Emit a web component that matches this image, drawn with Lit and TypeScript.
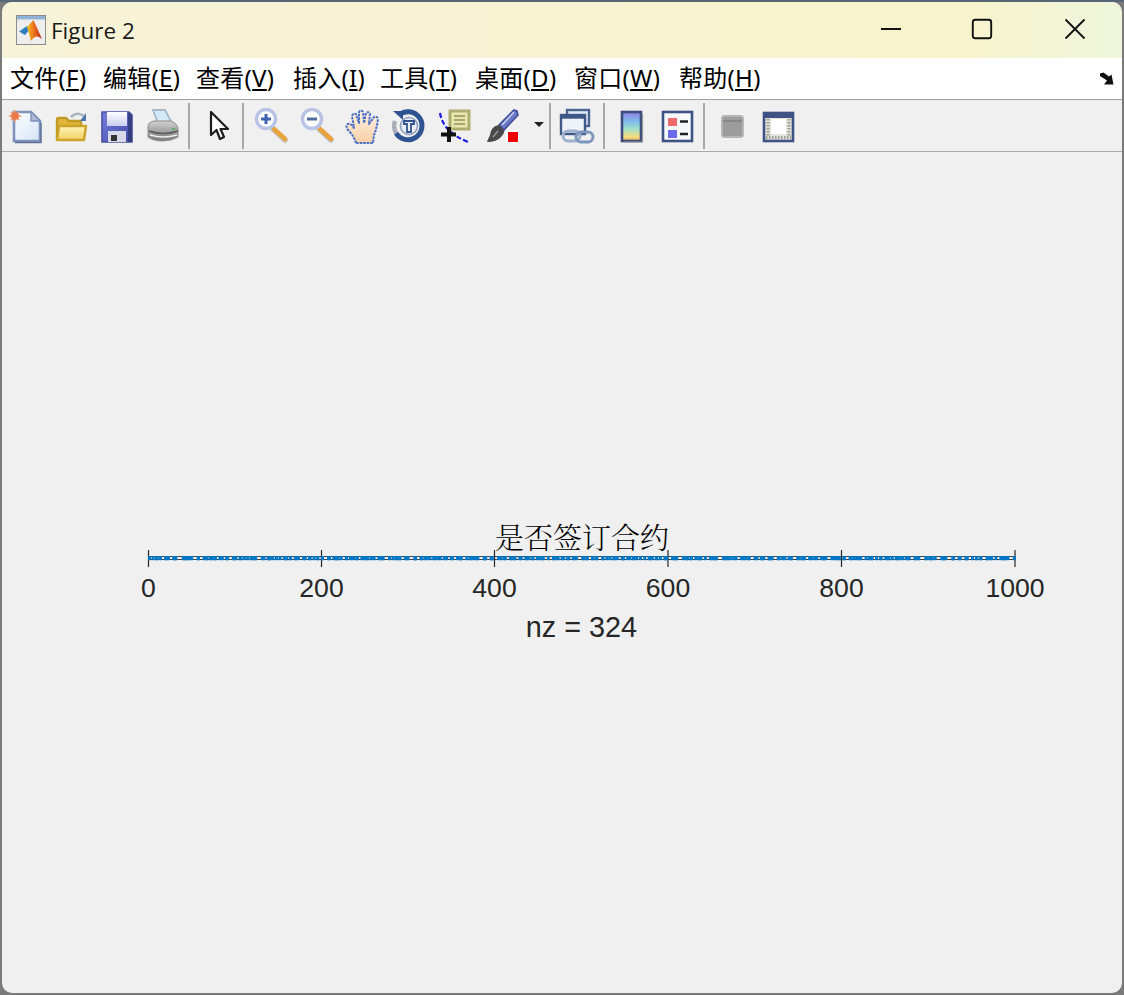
import { LitElement, css, html, svg } from 'lit';
import { customElement } from 'lit/decorators.js';

// label, access key, slot width in the menu bar
const MENUS: [string, string, number][] = [
  ['文件', 'F', 93], ['编辑', 'E', 93], ['查看', 'V', 97], ['插入', 'I', 87],
  ['工具', 'T', 95], ['桌面', 'D', 99], ['窗口', 'W', 105], ['帮助', 'H', 90],
];

const TICKS = [
  { x: 148.5, label: '0' },
  { x: 321.5, label: '200' },
  { x: 494.5, label: '400' },
  { x: 668, label: '600' },
  { x: 841.5, label: '800' },
  { x: 1015, label: '1000' },
];

// spy() marks: fixed seed so the picture never changes between runs
function spyDots() {
  let seed = 20240;
  const out: number[] = [];
  const step = 863 / 324;
  for (let i = 0; i < 324; i++) {
    seed = (seed * 16807) % 2147483647;
    out.push(148.5 + (i + (seed / 2147483647) * 2 - 0.5) * step);
  }
  return out;
}

const icon = (body: unknown) => html`<svg class="ico" viewBox="0 0 36 36" width="36" height="36">${body}</svg>`;

const DEFS = svg`
  <defs>
    <linearGradient id="paper" x1="0" y1="0" x2="1" y2="1"><stop offset="0" stop-color="#ffffff"/><stop offset="1" stop-color="#d3e4f8"/></linearGradient>
    <linearGradient id="fold" x1="0" y1="0" x2="0" y2="1"><stop offset="0" stop-color="#fff6b8"/><stop offset="1" stop-color="#f2cf63"/></linearGradient>
    <linearGradient id="disk" x1="0" y1="0" x2="1" y2="1"><stop offset="0" stop-color="#7a7fe0"/><stop offset="1" stop-color="#3d4aa0"/></linearGradient>
    <linearGradient id="label" x1="0" y1="0" x2="0" y2="1"><stop offset="0" stop-color="#ffffff"/><stop offset="1" stop-color="#c9cdf0"/></linearGradient>
    <linearGradient id="printer" x1="0" y1="0" x2="0" y2="1"><stop offset="0" stop-color="#d0d0d0"/><stop offset="1" stop-color="#787878"/></linearGradient>
    <linearGradient id="skin" x1="0" y1="0" x2="0" y2="1"><stop offset="0" stop-color="#fff2e2"/><stop offset="1" stop-color="#f7cfa8"/></linearGradient>
    <linearGradient id="cbar" x1="0" y1="0" x2="0" y2="1">
      <stop offset="0" stop-color="#8f80e8"/><stop offset=".35" stop-color="#7fc0e8"/><stop offset=".6" stop-color="#a5e0c4"/><stop offset=".85" stop-color="#f5dc80"/><stop offset="1" stop-color="#f0b060"/>
    </linearGradient>
    <linearGradient id="peak" x1="0" y1="0" x2="1" y2="0"><stop offset="0" stop-color="#f5c21c"/><stop offset=".55" stop-color="#e8641a"/><stop offset="1" stop-color="#b8261a"/></linearGradient>
  </defs>`;

const lens = (mark: unknown) => svg`
  <path d="M20 21 L32 32" stroke="#8a8a8a" stroke-width="5.5" stroke-linecap="round" opacity=".45"/>
  <path d="M21 21 L32 31" stroke="#e8a33c" stroke-width="4.5" stroke-linecap="round"/>
  <circle cx="13" cy="11" r="9.5" fill="#ffffff" stroke="#b9c3e6" stroke-width="3.4"/>
  ${mark}`;

const ICONS = {
  newFile: icon(svg`
    <path d="M7 4 H24 L33 13 V33 H7 Z" fill="url(#paper)" stroke="#7f93bd" stroke-width="2.6"/>
    <path d="M24 4 V13 H33 Z" fill="#aebcd8" stroke="#7f93bd" stroke-width="1.4"/>
    <path d="M34 15 V34.5 H8" fill="none" stroke="#5d6f96" stroke-width="1.4"/>
    <path d="M8 2 V14 M2 8 H14 M4 4 L12 12 M12 4 L4 12" stroke="#f0a080" stroke-width="1.8"/>
    <circle cx="8" cy="8" r="3.8" fill="#ea7a45"/>`),
  open: icon(svg`
    <path d="M4 31 V12 Q4 10 6 10 H13 L16 13 H28 V31 Z" fill="#e0b53a" stroke="#c09a24" stroke-width="2.4"/>
    <path d="M4 32 L6 18 H33 L31 32 Z" fill="url(#fold)" stroke="#cba428" stroke-width="2.4" stroke-linejoin="round"/>
    <path d="M18 9 Q24 3 31 8" fill="none" stroke="#a9b2c0" stroke-width="2.6"/>
    <path d="M33 5 V13 H27 Z" fill="#4f76a8"/>`),
  save: icon(svg`
    <path d="M3 4 H30 L33 7 V34 H3 Z" fill="url(#disk)" stroke="#4a519f" stroke-width="1.6"/>
    <path d="M33 7 V34 H29 V4 Z" fill="#2e3a78" opacity=".8"/>
    <rect x="8" y="4" width="20" height="14" fill="url(#label)"/>
    <rect x="9" y="23" width="18" height="11" fill="#d7d8e8"/>
    <rect x="12" y="27" width="6" height="6" fill="#333"/>`),
  print: icon(svg`
    <path d="M8 2 H20 L27 15 H13 Z" fill="#d5eaf8" stroke="#a7b9c6" stroke-width="1.8"/>
    <path d="M3 19 Q3 14 9 13 H26 Q33 16 33 21 V29 Q26 33 18 33 Q8 33 3 29 Z" fill="url(#printer)" stroke="#8c8c8c"/>
    <path d="M4 23 Q18 28 33 23" fill="none" stroke="#5c5c5c" stroke-width="1.6"/>
    <path d="M5 27 Q18 31 32 27" fill="none" stroke="#eee" stroke-width="1.6"/>
    <rect x="27" y="20" width="3" height="2" fill="#55b060"/>`),
  arrow: icon(svg`
    <path d="M9 4 L9 27 L14.5 22 L18 31 L22 29 L18.5 21 L26 21 Z" fill="#fff" stroke="#1c1c1c" stroke-width="2.2" stroke-linejoin="round"/>`),
  zoomIn: icon(lens(svg`<path d="M13 6 V16 M8 11 H18" stroke="#3f63ae" stroke-width="3"/>`)),
  zoomOut: icon(lens(svg`<path d="M8 11 H18" stroke="#4f6c9c" stroke-width="3"/>`)),
  hand: icon(svg`
    <path d="M11 35 Q9 28 3 22 Q0 18 3 16 Q6 15 9 20 L7 8 Q8 5 11 6 L14 15 L14 4 Q16 1 18 4 L19 15 L21 5 Q24 3 25 6 L24 16 L29 9 Q32 8 33 11 Q32 20 29 27 L28 35 Z"
      fill="url(#skin)" stroke="#4a6fc4" stroke-width="2" stroke-dasharray="2.6 .9" stroke-linejoin="round"/>`),
  rotate: icon(svg`
    <path d="M8 7 A14 14 0 1 1 5 25" fill="none" stroke="#2f5290" stroke-width="5"/>
    <path d="M5 25 A14 14 0 0 1 4 13" fill="none" stroke="#a9adb5" stroke-width="4.4"/>
    <path d="M2 3 H12 V12 Z" fill="#2f5290"/>
    <circle cx="18" cy="18" r="8.5" fill="#e9eef6" stroke="#8fa0c0" stroke-width="1.6"/>
    <path d="M13 13 H23 V16 H20 V24 H16 V16 H13 Z" fill="none" stroke="#2f5290" stroke-width="1.8"/>`),
  cursor: icon(svg`
    <rect x="13" y="3" width="19" height="18" fill="#e8e8ae" stroke="#aeae72" stroke-width="3"/>
    <path d="M17 8 H28 M17 12 H28 M17 16 H28" stroke="#8f8f60" stroke-width="1.6"/>
    <path d="M3 5 Q6 24 31 34" fill="none" stroke="#1a1ae0" stroke-width="2.2" stroke-dasharray="5 2.4"/>
    <path d="M12 19 V34 M4 26.5 H19" stroke="#111" stroke-width="4"/>`),
  brush: icon(svg`
    <path d="M32 3 L29 2 L14 17 L19 22 L33 7 Z" fill="#6a79c8" stroke="#3e4d96" stroke-width="1.6"/>
    <path d="M29 4 L17 17" stroke="#c8d0f0" stroke-width="1.5"/>
    <path d="M14 17 Q6 18 5 27 Q3 31 2 34 Q12 34 16 29 Q20 25 19 22 Z" fill="#4a4a4a"/>
    <path d="M8 29 L13 23" stroke="#999" stroke-width="1.4"/>
    <rect x="21" y="22" width="13" height="13" fill="#fff"/>
    <rect x="23" y="24" width="10" height="10" fill="#f00000"/>`),
  link: icon(svg`
    <rect x="8" y="2" width="22" height="16" fill="#e3e9f5" stroke="#4c6490" stroke-width="2.4"/>
    <rect x="2" y="7" width="24" height="19" fill="#eef2f9" stroke="#3e5888" stroke-width="2.4"/>
    <path d="M2 9 H26" stroke="#3e5888" stroke-width="3.4"/>
    <rect x="4" y="23" width="17" height="10" rx="5" fill="none" stroke="#9db0cc" stroke-width="3"/>
    <rect x="17" y="24" width="17" height="10" rx="5" fill="none" stroke="#7d97bc" stroke-width="3"/>`),
  colorbar: icon(svg`
    <rect x="8" y="4" width="19" height="29" fill="url(#cbar)" stroke="#3d4d80" stroke-width="2.6"/>
    <path d="M28.5 6 V34 H10" fill="none" stroke="#9a9a9a" stroke-width="1.2"/>`),
  legend: icon(svg`
    <rect x="3" y="4" width="29" height="29" fill="#f7f8fc" stroke="#3f5284" stroke-width="2.6"/>
    <rect x="8" y="10" width="9" height="8" fill="#ef6a6a"/>
    <rect x="8" y="22" width="9" height="8" fill="#6a6ae8"/>
    <path d="M20 13.5 H28 M20 26 H28" stroke="#222" stroke-width="2.4"/>`),
  hide: icon(svg`
    <rect x="7" y="8" width="21" height="21" rx="2.5" fill="#9c9c9c" stroke="#b4b4b4" stroke-width="1.8"/>
    <path d="M8 13 H27" stroke="#808080" stroke-width="1.4"/>`),
  show: icon(svg`
    <rect x="3" y="5" width="29" height="28" fill="#e4e4dc" stroke="#3e5284" stroke-width="2.6"/>
    <rect x="3" y="5" width="29" height="5" fill="#3e5284"/>
    <rect x="10" y="11" width="15" height="15" fill="#fff"/>
    <path d="M7 11 V29 M28 11 V29 M5 29.5 H30" stroke="#9c9c94" stroke-width="3" stroke-dasharray="1.5 1.5"/>`),
};

@customElement('app-root')
export class AppRoot extends LitElement {
  static styles = css`
:host {
  display: block;
  width: 1124px;
  height: 995px;
  padding: 2px;
  box-sizing: border-box;
  background: linear-gradient(#566675 0, #566675 2px, #7b7b7b 2px);
}
.win {
  height: 991px;
  border-radius: 10px;
  overflow: hidden;
  display: flex;
  flex-direction: column;
  background: #f0f0f0;
}
.title {
  height: 56px;
  flex: none;
  display: flex;
  align-items: center;
  background: linear-gradient(90deg, #f7f3d8 0, #f8f3d3 45%, #f8f3cc 85%, #eff6dc 100%);
  color: #1a1a1a;
  font: 22.5px "Open Sans", "Noto Sans", sans-serif;
}
.logo {
  margin: 0 5px 0 14px;
}
.caption {
  flex: 1;
}
.winbtn {
  width: 92px;
  height: 54px;
  margin-bottom: 2px;
  display: flex;
  align-items: center;
  justify-content: center;
}
.winbtn.max {
  margin-left: -1px;
  margin-right: 1px;
}
.winbtns {
  display: flex;
  margin-right: 1px;
}
.menu {
  height: 41px;
  flex: none;
  display: flex;
  align-items: center;
  padding-left: 8px;
  background: #fff;
  border-bottom: 1px solid #a0a0a0;
  color: #000;
  font: 24px/36px "Noto Sans", "Noto Sans CJK SC", sans-serif;
}
.menu span {
  height: 36px;
  margin-bottom: 2px;
  letter-spacing: 0.3px;
  white-space: nowrap;
}
.menu u {
  text-underline-offset: 2px;
}
.overflow {
  margin-left: auto;
  margin-right: 7px;
  display: flex;
}
.tools {
  height: 51px;
  flex: none;
  display: flex;
  align-items: center;
  border-bottom: 1px solid #a9a9a9;
}
.b {
  width: 46px;
  height: 48px;
  display: flex;
  align-items: center;
  justify-content: center;
  flex: none;
}
.sep {
  width: 6px;
  height: 46px;
  flex: none;
  display: flex;
  justify-content: center;
}
.sep::before {
  content: '';
  width: 2px;
  background: #a8a8a8;
}
.pointer { margin: 0 -3px 0 5px; }
.after-pointer { margin-left: 2px; }
.brush { margin-left: 2px; }
.link { margin-left: 1px; }
.sep.nudge { margin-left: 1px; }
.cbar { margin-left: 2px; }
.hide { margin-left: 3px; }
.drop {
  width: 0;
  height: 0;
  margin: 0 3px 0 8px;
  border-left: 5px solid transparent;
  border-right: 5px solid transparent;
  border-top: 5px solid #222;
  position: relative;
  top: -1px;
  flex: none;
}
.ico {
  display: block;
  filter: blur(0.4px);
}
.plot {
  flex: 1;
  min-height: 0;
}
.plot svg {
  display: block;
}
.dots {
  filter: blur(0.25px);
}
.tick {
  font: 26.6px "Liberation Sans", Arial, sans-serif;
  fill: #262626;
  text-anchor: middle;
}
.xlabel {
  font: 28.8px "Liberation Sans", Arial, sans-serif;
  fill: #262626;
  text-anchor: middle;
}
.ptitle {
  font: 300 29px "Noto Serif CJK SC", "Noto Sans CJK SC", serif;
  fill: #000;
  text-anchor: middle;
}
`;

  renderPlot() {
    return html`<svg width="1120" height="840" viewBox="2 152 1120 840">
      <text class="ptitle" x="582" y="548.5">是否签订合约</text>
      <path d="M148.5 556.5 H1015 M148.5 559.5 H1015" stroke="#444" stroke-width="1"/>
      ${TICKS.map((t) => svg`<path d="M${t.x} 550 V567" stroke="#262626" stroke-width="1.2"/>`)}
      <g class="dots">
        ${spyDots().map((x) => svg`<rect x=${x} y="556" width="3" height="4.2" fill="#0076c4"/>`)}
      </g>
      ${TICKS.map((t) => svg`<text class="tick" x=${t.x} y="597">${t.label}</text>`)}
      <text class="xlabel" x="581.5" y="637">nz = 324</text>
    </svg>`;
  }

  render() {
    return html`
<div class="win">
  <svg width="0" height="0" style="position:absolute">${DEFS}</svg>
  <div class="title">
    <svg class="logo" width="30" height="30" viewBox="0 0 30 30">
      <rect x=".5" y=".5" width="29" height="29" fill="#eeeeee" stroke="#8d8d8d"/>
      <rect x="1" y="1" width="28" height="3.4" fill="#8fb4d8"/>
      <path d="M3 16.5 L11 11 L14 14 L9 20 Z" fill="#2f7fc0"/>
      <path d="M11 12 Q14 9 17.5 5 L26 24 Q20 18 15 26 Q13 18 11 12 Z" fill="url(#peak)"/>
    </svg>
    <span class="caption">Figure 2</span>
    <div class="winbtns">
      <div class="winbtn">
        <svg width="22" height="22" viewBox="0 0 22 22"><path d="M1 11 H21" stroke="#111" stroke-width="1.8"/></svg>
      </div>
      <div class="winbtn max">
        <svg width="22" height="22" viewBox="0 0 22 22"><rect x="1.8" y="1.8" width="18.4" height="18.4" rx="2.5" fill="none" stroke="#111" stroke-width="1.9"/></svg>
      </div>
      <div class="winbtn">
        <svg width="22" height="22" viewBox="0 0 22 22"><path d="M1.5 1.5 L20.5 20.5 M20.5 1.5 L1.5 20.5" stroke="#111" stroke-width="1.8"/></svg>
      </div>
    </div>
  </div>
  <div class="menu">
    ${MENUS.map(([name, key, w]) => html`<span style="width:${w}px">${name}(<u>${key}</u>)</span>`)}
    <div class="overflow">
      <svg width="16" height="14" viewBox="0 0 16 14"><path d="M1 1.5 L4.5 .5 L10 4.5 L12.5 2.5 L14.5 12.5 L5 12.5 L8 8.5 L1 4 Z" fill="#111"/></svg>
    </div>
  </div>
  <div class="tools">
    <div class="b">${ICONS.newFile}</div>
    <div class="b">${ICONS.open}</div>
    <div class="b">${ICONS.save}</div>
    <div class="b">${ICONS.print}</div>
    <div class="sep"></div>
    <div class="b pointer">${ICONS.arrow}</div>
    <div class="sep"></div>
    <div class="b after-pointer">${ICONS.zoomIn}</div>
    <div class="b">${ICONS.zoomOut}</div>
    <div class="b">${ICONS.hand}</div>
    <div class="b">${ICONS.rotate}</div>
    <div class="b">${ICONS.cursor}</div>
    <div class="b brush">${ICONS.brush}</div>
    <div class="drop"></div>
    <div class="sep"></div>
    <div class="b link">${ICONS.link}</div>
    <div class="sep nudge"></div>
    <div class="b cbar">${ICONS.colorbar}</div>
    <div class="b">${ICONS.legend}</div>
    <div class="sep"></div>
    <div class="b hide">${ICONS.hide}</div>
    <div class="b">${ICONS.show}</div>
  </div>
  <div class="plot">${this.renderPlot()}</div>
</div>`;
  }
}
